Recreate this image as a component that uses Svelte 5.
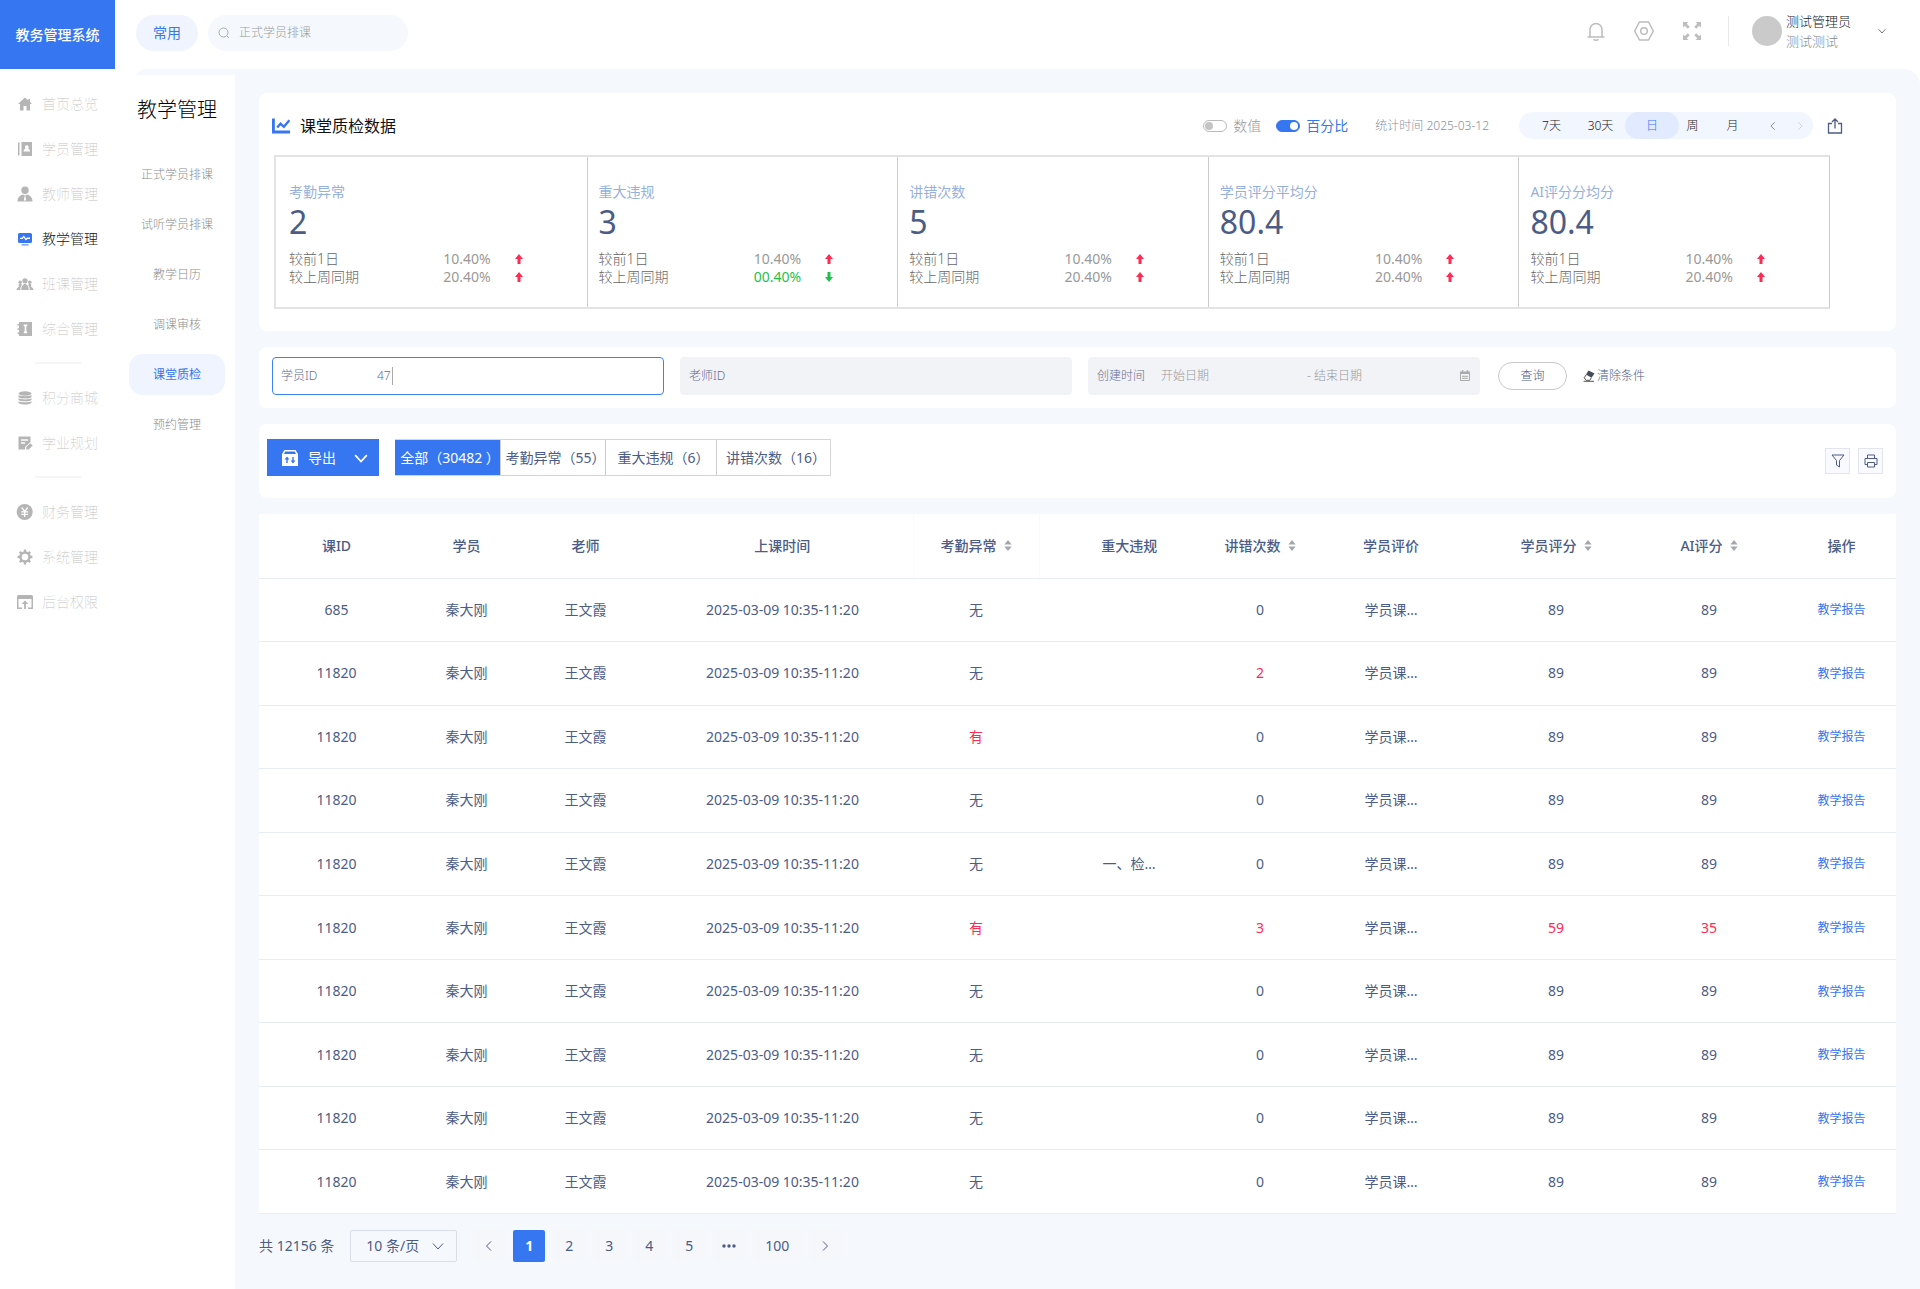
<script>
  let keyword = $state("");
  let studentId = $state("47");
  let teacherId = $state("");
  let startDate = $state("");
  let endDate = $state("");
  let showCount = $state(false);
  let showPercent = $state(true);
  let range = $state("日");
  let activeTab = $state(0);
  let pageSize = $state("10");
  let page = $state(1);

  const menuGroups = [
    [
      { icon: "home", label: "首页总览" },
      { icon: "contact", label: "学员管理" },
      { icon: "teacher", label: "教师管理" },
      { icon: "monitor", label: "教学管理", active: true },
      { icon: "group", label: "班课管理" },
      { icon: "book", label: "综合管理" },
    ],
    [
      { icon: "coins", label: "积分商城" },
      { icon: "plan", label: "学业规划" },
    ],
    [
      { icon: "yen", label: "财务管理" },
      { icon: "gear", label: "系统管理" },
      { icon: "upload", label: "后台权限" },
    ],
  ];

  const subMenu = ["正式学员排课", "试听学员排课", "教学日历", "调课审核", "课堂质检", "预约管理"];

  const stats = [
    { name: "考勤异常", value: "2", day: "10.40%", week: "20.40%" },
    { name: "重大违规", value: "3", day: "10.40%", week: "00.40%", weekDown: true },
    { name: "讲错次数", value: "5", day: "10.40%", week: "20.40%" },
    { name: "学员评分平均分", value: "80.4", day: "10.40%", week: "20.40%" },
    { name: "AI评分分均分", value: "80.4", day: "10.40%", week: "20.40%" },
  ];

  const tabs = ["全部（30482 ）", "考勤异常（55）", "重大违规（6）", "讲错次数（16）"];

  const columns = [
    { title: "课ID" },
    { title: "学员" },
    { title: "老师" },
    { title: "上课时间" },
    { title: "考勤异常", sort: true, edge: true },
    { title: "重大违规" },
    { title: "讲错次数", sort: true },
    { title: "学员评价" },
    { title: "学员评分", sort: true },
    { title: "AI评分", sort: true },
    { title: "操作" },
  ];

  const base = { id: "11820", absent: "无", violation: "", wrong: 0, score: 89, ai: 89 };
  const rows = [
    { ...base, id: "685" },
    { ...base, wrong: 2 },
    { ...base, absent: "有" },
    base,
    { ...base, violation: "一、检…" },
    { ...base, absent: "有", wrong: 3, score: 59, ai: 35 },
    base,
    base,
    base,
    base,
  ];
</script>

{#snippet menuIcon(name)}
  <svg class="menu-icon" viewBox="0 0 16 16" aria-hidden="true">
    {#if name === "home"}
      <path d="M8 1.500 1 8h2v6.500h3.500V10h3v4.500H13V8h2l-2-1.900V3h-1.800v1.400z" />
    {:else if name === "contact"}
      <path d="M1 1.500h1.500v13H1z" />
      <path fill-rule="evenodd" d="M4.500 1h10.500v14H4.500zM9.800 4.300a1.900 1.900 0 0 0-1.300 3.300c-1.200.4-1.900 1.300-1.900 2.900H13c0-1.600-.7-2.500-1.900-2.900a1.900 1.900 0 0 0-1.300-3.300z" />
    {:else if name === "teacher"}
      <circle cx="8" cy="4.200" r="3.700" />
      <path fill-rule="evenodd" d="M.5 15.500c0-4 2.500-6.500 5.500-7l2 1.200 2-1.200c3 .5 5.500 3 5.500 7zM7.400 10.500 7 14l1 1 1-1-.4-3.500z" />
    {:else if name === "monitor"}
      <path fill-rule="evenodd" d="M2.500 2h11A1.500 1.500 0 0 1 15 3.500v7a1.500 1.500 0 0 1-1.500 1.500h-11A1.500 1.500 0 0 1 1 10.500v-7A1.500 1.500 0 0 1 2.500 2zM3 6.800v1.300h2.600l1.200-1.500 2 3 1.800-1.700H13V6.600h-3l-1 .9-2.200-3-1.900 2.300z" />
      <path d="M4.500 13h7v1.700h-7z" opacity=".6" />
    {:else if name === "group"}
      <circle cx="8" cy="4.800" r="2.600" />
      <circle cx="3.200" cy="6.200" r="1.800" />
      <circle cx="12.800" cy="6.200" r="1.800" />
      <path d="M4.300 14c0-3.500 1.500-6 3.700-6s3.700 2.500 3.700 6zM-.5 14c0-1.500 1-2.500 2.300-3V8h2.800v1.500C3.700 10.700 3.300 12.300 3.300 14zM16.500 14c0-1.500-1-2.500-2.300-3V8h-2.800v1.500c.9 1.200 1.300 2.800 1.300 4.500z" />
    {:else if name === "book"}
      <path fill-rule="evenodd" d="M2 1h13v14H2v-2H.5v-1.500H2V8.800H.5V7.300H2V4.500H.5V3H2zM6.700 3.500v1.800h1v4.200L6.500 12.300h4L9.300 9.500V5.300h1V3.500z" />
    {:else if name === "coins"}
      <ellipse cx="8" cy="3.500" rx="6.500" ry="2.200" />
      <path d="M1.500 5c1 1.500 12 1.500 13 0v2c-1 2-12 2-13 0zM1.500 8.300c1 1.500 12 1.500 13 0v1.500c-1 2-12 2-13 0zM1.500 11.200c1 1.500 12 1.500 13 0v1.500c-1 2.400-12 2.400-13 0z" />
    {:else if name === "plan"}
      <path fill-rule="evenodd" d="M1.500 1.500h12V7L8 12v2.500H1.500zM4 4.300v1.400h7V4.300zM4 7.300v1.400h4V7.300z" />
      <path d="m9.200 12.200 4-4 2.500 2.400-4 4H9.200z" />
    {:else if name === "yen"}
      <circle cx="7.700" cy="8" r="8" />
      <path class="knock" d="m4.700 3.500 3 4 3-4M7.700 7.500v5.500M4.300 7.800h6.800M4.300 10.400h6.800" />
    {:else if name === "gear"}
      <circle class="ring" cx="8" cy="8" r="4.500" />
      <path class="teeth" d="M8 .6v2.500M8 12.900v2.500M.6 8h2.500M12.900 8h2.500M2.800 2.800l1.800 1.800M11.400 11.400l1.800 1.800M2.800 13.200l1.800-1.800M11.400 4.600l1.800-1.800" />
    {:else}
      <path fill-rule="evenodd" d="M1.500 1h13A1.500 1.500 0 0 1 16 2.500V15h-5v-1.500h3.500V5h-13v8.500H5V15H0V2.500A1.500 1.500 0 0 1 1.500 1z" />
      <path d="m8 6.500 3.300 3.500H8.900v5H7.100v-5H4.700z" />
    {/if}
  </svg>
{/snippet}

{#snippet chevron(dir)}
  <svg class="chevron" viewBox="0 0 12 12" aria-hidden="true">
    {#if dir === "left"}
      <path d="M8 1.500 3.500 6 8 10.500" />
    {:else if dir === "right"}
      <path d="M4 1.500 8.500 6 4 10.500" />
    {:else}
      <path d="M1 3.500 6 9l5-5.500" />
    {/if}
  </svg>
{/snippet}

{#snippet trend(down)}
  <svg class="trend" class:down viewBox="0 0 8 10" aria-hidden="true">
    {#if down}
      <path d="M2.500 0h3v5H8L4 10 0 5h2.500z" />
    {:else}
      <path d="M4 0l4 5H5.500v5h-3V5H0z" />
    {/if}
  </svg>
{/snippet}

<div class="page">
  <header class="topbar">
    <div class="logo">教务管理系统</div>
    <button class="common">常用</button>
    <label class="search">
      <svg viewBox="0 0 12 12" aria-hidden="true"><circle cx="5.500" cy="5.500" r="4.500" /><path d="m9 9 2 2" /></svg>
      <input type="text" placeholder="正式学员排课" aria-label="搜索" bind:value={keyword} />
    </label>
    <div class="tools">
      <button aria-label="通知">
        <svg viewBox="0 0 20 20"><path d="M4 16V8.500a6 6 0 0 1 12 0V16M1.500 16h17M7.500 18.300c1 1.200 4 1.200 5 0" /></svg>
      </button>
      <button aria-label="设置">
        <svg viewBox="0 0 20 20"><path d="M5.500 1h9L19.300 10l-4.800 9h-9L.7 10z" /><circle cx="10" cy="10" r="3.300" /></svg>
      </button>
      <button aria-label="全屏">
        <svg class="solid" viewBox="0 0 20 20"><path d="M1 1h5.500L4.700 2.800l3 3-1.900 1.900-3-3L1 6.500zM19 1v5.500l-1.800-1.800-3 3-1.900-1.900 3-3L13.500 1zM1 19v-5.500l1.800 1.800 3-3 1.900 1.900-3 3L6.500 19zM19 19h-5.500l1.800-1.800-3-3 1.900-1.900 3 3 1.800-1.800z" /></svg>
      </button>
    </div>
    <div class="user">
      <span class="avatar"></span>
      <div class="who">
        <span>测试管理员</span>
        <span class="role">测试测试</span>
      </div>
      <button class="user-menu" aria-label="用户菜单">{@render chevron("down")}</button>
    </div>
  </header>

  <div class="body">
    <nav class="menu">
      {#each menuGroups as group}
        <ul>
          {#each group as item}
            <li>
              <a href="#menu" class:active={item.active}>
                {@render menuIcon(item.icon)}
                {item.label}
              </a>
            </li>
          {/each}
        </ul>
      {/each}
    </nav>

    <div class="workspace">
      <aside class="submenu">
        <h1>教学管理</h1>
        {#each subMenu as label}
          <a href="#sub" class:active={label === "课堂质检"}>{label}</a>
        {/each}
      </aside>

      <main>
        <section class="card overview">
          <div class="overview-head">
            <svg class="chart-icon" viewBox="0 0 20 16" aria-hidden="true">
              <path d="M1.500 0v14.300H19" />
              <path class="line" d="m5.500 9.500 3.500-4 3.500 3.300L18.300 2" />
            </svg>
            <h2>课堂质检数据</h2>
            <label class="switch"><input type="checkbox" bind:checked={showCount} /><span>数值</span></label>
            <label class="switch"><input type="checkbox" bind:checked={showPercent} /><span>百分比</span></label>
            <span class="time">统计时间 2025-03-12</span>
            <div class="range">
              {#each ["7天", "30天", "日", "周", "月"] as item}
                <button class:active={range === item} onclick={() => (range = item)}>{item}</button>
              {/each}
              <button class="step" aria-label="上一页">{@render chevron("left")}</button>
              <button class="step off" aria-label="下一页">{@render chevron("right")}</button>
            </div>
            <button class="share" aria-label="分享">
              <svg viewBox="0 0 16 16"><path d="M5 5.500H1.500V15h13V5.500H11M8 10.500V1.500M5 4l3-3 3 3" /></svg>
            </button>
          </div>

          <div class="stats">
            {#each stats as stat}
              <div class="stat">
                <div class="stat-name">{stat.name}</div>
                <div class="stat-value">{stat.value}</div>
                <div class="compare">
                  <span>较前1日</span>
                  <span class="rate">{stat.day}</span>
                  {@render trend(false)}
                </div>
                <div class="compare">
                  <span>较上周同期</span>
                  <span class="rate" class:green={stat.weekDown}>{stat.week}</span>
                  {@render trend(stat.weekDown)}
                </div>
              </div>
            {/each}
          </div>
        </section>

        <section class="card filters">
          <label class="field focused">
            <span>学员ID</span>
            <input type="text" style="width: {studentId.length + 1}ch" bind:value={studentId} />
            <i class="caret"></i>
          </label>
          <label class="field">
            <span>老师ID</span>
            <input type="text" bind:value={teacherId} />
          </label>
          <div class="field dates">
            <label for="start-date">创建时间</label>
            <input id="start-date" type="text" placeholder="开始日期" bind:value={startDate} />
            <input type="text" placeholder="- 结束日期" aria-label="结束日期" bind:value={endDate} />
            <svg class="calendar" viewBox="0 0 12 12" aria-hidden="true">
              <path d="M1 1.500h10V4H1zM3 0h1.200v2H3zM7.800 0H9v2H7.800z" />
              <path class="frame" d="M1.500 2v8.500h9V2M3 6.300h6M3 8.300h6" />
            </svg>
          </div>
          <button class="query">查询</button>
          <button class="clear">
            <svg viewBox="0 0 12 12" aria-hidden="true">
              <path d="M5.500.5 11.500 3.500 8.500 7.800 3 4.500z" />
              <path class="outline" d="M3.300 4.700 1.200 7.800l2 2.500h3.600l1.500-2.500M.5 11.300h10.500" />
            </svg>
            清除条件
          </button>
        </section>

        <section class="card toolbar">
          <button class="export">
            <svg viewBox="0 0 16 16" aria-hidden="true">
              <path fill-rule="evenodd" d="M2.500 0h11L16 4v12H0V4zM3.300 1.500 2 4h12l-1.300-2.500zM5 6.500 2.500 9.500h1.800V13h1.400V9.500h1.800zM11 13.500l2.500-3h-1.800V7h-1.400v3.500H8.500z" />
            </svg>
            导出
            {@render chevron("down")}
          </button>
          <div class="tabs">
            {#each tabs as tab, i}
              <button class:active={activeTab === i} onclick={() => (activeTab = i)}>{tab}</button>
            {/each}
          </div>
          <div class="actions">
            <button aria-label="筛选">
              <svg viewBox="0 0 14 14"><path d="M1 1h12L8.500 6.500V13l-3-2V6.500z" /></svg>
            </button>
            <button aria-label="打印">
              <svg viewBox="0 0 14 14"><path d="M3.500 4.500V1h7v3.500M3.500 10.500H1v-6h12v6h-2.500M3.500 8.500h7V13h-7z" /></svg>
            </button>
          </div>
        </section>

        <table>
          <colgroup>
            <col class="c-id" /><col class="c-student" /><col class="c-teacher" /><col class="c-time" />
            <col class="c-absent" /><col class="c-wide" /><col class="c-wrong" /><col class="c-wide" />
            <col class="c-score" /><col class="c-ai" /><col class="c-action" />
          </colgroup>
          <thead>
            <tr>
              {#each columns as col}
                <th class:edge={col.edge}>
                  {#if col.sort}
                    <button class="sort">
                      {col.title}
                      <svg viewBox="0 0 8 12" aria-hidden="true"><path d="M4 0l4 5H0zM4 12l4-5H0z" /></svg>
                    </button>
                  {:else}
                    {col.title}
                  {/if}
                </th>
              {/each}
            </tr>
          </thead>
          <tbody>
            {#each rows as row}
              <tr>
                <td>{row.id}</td>
                <td>秦大刚</td>
                <td>王文霞</td>
                <td>2025-03-09 10:35-11:20</td>
                <td class:bad={row.absent === "有"}>{row.absent}</td>
                <td>{row.violation}</td>
                <td class:bad={row.wrong > 0}>{row.wrong}</td>
                <td>学员课…</td>
                <td class:bad={row.score < 60}>{row.score}</td>
                <td class:bad={row.ai < 60}>{row.ai}</td>
                <td><a href="#report">教学报告</a></td>
              </tr>
            {/each}
          </tbody>
        </table>

        <div class="pager">
          <span>共 12156 条</span>
          <div class="size">
            <select aria-label="每页条数" bind:value={pageSize}>
              <option value="10">10 条/页</option>
              <option value="20">20 条/页</option>
              <option value="50">50 条/页</option>
            </select>
            {@render chevron("down")}
          </div>
          <div class="pages">
            <button aria-label="上一页">{@render chevron("left")}</button>
            {#each [1, 2, 3, 4, 5] as n}
              <button class:active={page === n} onclick={() => (page = n)}>{n}</button>
            {/each}
            <button aria-label="更多">
              <svg class="dots" viewBox="0 0 14 4"><circle cx="2" cy="2" r="1.700" /><circle cx="7" cy="2" r="1.700" /><circle cx="12" cy="2" r="1.700" /></svg>
            </button>
            <button class="last">100</button>
            <button aria-label="下一页">{@render chevron("right")}</button>
          </div>
        </div>
      </main>
    </div>
  </div>
</div>

<style>
  :global(body) {
    margin: 0;
    background: #fff;
  }

  .page {
    --blue: #3676f1;
    --ink: #4c5c86;
    --bg: #f5f9fd;
    --red: #ff2b52;
    font-family: "Noto Sans", "Noto Sans CJK SC", sans-serif;
    font-size: 14px;
    line-height: 20px;
    color: var(--ink);
    min-height: 100vh;
    display: flex;
    flex-direction: column;
  }

  .page :global(*) {
    box-sizing: border-box;
  }

  button,
  input,
  select {
    font: inherit;
    color: inherit;
    border: 0;
    padding: 0;
    margin: 0;
    background: none;
    outline: 0;
  }

  button {
    cursor: pointer;
    display: flex;
    align-items: center;
    justify-content: center;
    white-space: nowrap;
  }

  a {
    color: inherit;
    text-decoration: none;
  }

  svg {
    flex: none;
    fill: none;
    stroke: currentColor;
  }

  .chevron {
    width: 12px;
    height: 12px;
  }

  /* top bar */
  .topbar {
    display: flex;
    align-items: center;
    height: 69px;
    padding-right: 34px;
  }

  .logo {
    width: 115px;
    height: 69px;
    display: flex;
    align-items: center;
    justify-content: center;
    background: var(--blue);
    color: #fff;
    font-weight: 500;
  }

  .common {
    width: 62px;
    height: 36px;
    margin: 0 10px 3px 21px;
    border-radius: 18px;
    background: #eff4ff;
    color: var(--blue);
  }

  .search {
    display: flex;
    align-items: center;
    gap: 9px;
    width: 200px;
    height: 36px;
    margin-bottom: 3px;
    padding: 0 10px;
    border-radius: 18px;
    background: var(--bg);
    font-size: 12px;
    color: #aaa;
    font-weight: 300;
  }

  .search svg {
    width: 12px;
    height: 12px;
  }

  .search input {
    flex: 1;
    min-width: 0;
  }

  input::placeholder {
    color: #999;
    opacity: 1;
  }

  .tools {
    display: flex;
    gap: 28px;
    margin: 0 26px 7px auto;
    color: #bdbdbd;
  }

  .tools svg {
    width: 20px;
    height: 20px;
    stroke-width: 1.500;
  }

  .tools .solid {
    fill: currentColor;
    stroke: none;
  }

  .user {
    display: flex;
    align-items: center;
    height: 30px;
    margin-bottom: 7px;
    padding-left: 23px;
    border-left: 1px solid #e8e8e8;
    font-size: 13px;
    color: #222;
    font-weight: 300;
  }

  .avatar {
    width: 30px;
    height: 30px;
    border-radius: 50%;
    background: #cacaca;
  }

  .who {
    display: flex;
    flex-direction: column;
    margin: 0 27px 0 4px;
  }

  .role {
    color: #888;
  }

  .user-menu {
    color: #777;
  }

  .user-menu :global(svg) {
    width: 8px;
    height: 8px;
    stroke-width: 1.500;
  }

  /* side menus */
  .body {
    flex: 1;
    display: flex;
  }

  .menu {
    width: 132px;
    flex: none;
    padding-top: 12px;
  }

  .menu ul {
    list-style: none;
    margin: 0;
    padding: 0;
  }

  .menu ul + ul::before {
    content: "";
    display: block;
    width: 46px;
    height: 2px;
    margin: 11px 0 11px 35px;
    background: #f5f5f5;
  }

  .menu a {
    display: flex;
    align-items: center;
    gap: 9px;
    height: 45px;
    padding-left: 17px;
    color: #c4c4c4;
    font-weight: 100;
  }

  .menu a.active {
    color: #111;
    font-weight: 300;
  }

  .menu-icon {
    width: 16px;
    height: 16px;
    overflow: visible;
    fill: #b5b5b5;
    stroke: none;
  }

  .active .menu-icon {
    fill: var(--blue);
  }

  .knock {
    fill: none;
    stroke: #fff;
    stroke-width: 1.3;
  }

  .ring,
  .teeth {
    fill: none;
    stroke: #b5b5b5;
    stroke-width: 2.4;
  }

  .workspace {
    flex: 1;
    min-width: 0;
    display: flex;
    border-radius: 16px 16px 0 0;
    background: var(--bg);
  }

  .submenu {
    flex: none;
    display: flex;
    flex-direction: column;
    gap: 9px;
    width: 106px;
    margin: 6px 0 0 -3px;
    padding: 21px 10px 0 0;
    background: #fff;
    text-align: center;
  }

  h1 {
    margin: 0 0 21px;
    font-size: 20px;
    line-height: 28px;
    font-weight: 300;
    color: #000;
  }

  .submenu a {
    display: flex;
    align-items: center;
    justify-content: center;
    height: 41px;
    border-radius: 14px;
    font-size: 12px;
    font-weight: 300;
    color: #8c8c8c;
  }

  .submenu a.active {
    background: #eff4ff;
    color: var(--blue);
    font-weight: 400;
  }

  /* content */
  main {
    flex: 1;
    min-width: 0;
    padding: 24px;
  }

  .card {
    background: #fff;
    border-radius: 8px;
    margin-bottom: 16px;
  }

  .overview {
    padding: 19px 66px 22px 15px;
  }

  .overview-head {
    display: flex;
    align-items: center;
    height: 27px;
    margin: 0 -13px 16px -2px;
  }

  .chart-icon {
    width: 19px;
    height: 16px;
    color: var(--blue);
    stroke-width: 3;
  }

  .chart-icon .line {
    stroke-width: 2.5;
  }

  h2 {
    margin: 0 auto 0 9px;
    font-size: 16px;
    font-weight: 400;
    color: #111;
  }

  .switch {
    display: flex;
    align-items: center;
    gap: 6px;
    margin-right: 15px;
    color: #999;
    font-weight: 300;
  }

  .switch input {
    appearance: none;
    display: flex;
    align-items: center;
    width: 24px;
    height: 12px;
    padding: 0 1px;
    border: 1px solid #bbb;
    border-radius: 6px;
  }

  .switch input::before {
    content: "";
    width: 8px;
    height: 8px;
    border-radius: 50%;
    background: #c4c4c4;
  }

  .switch input:checked {
    justify-content: flex-end;
    border-color: var(--blue);
    background: var(--blue);
  }

  .switch input:checked::before {
    background: #fff;
  }

  .switch input:checked + span {
    color: var(--blue);
    font-weight: 400;
  }

  .time {
    margin: 0 30px 0 12px;
    font-size: 12px;
    color: #858fa5;
    font-weight: 300;
  }

  .range {
    display: flex;
    height: 27px;
    padding-left: 8px;
    border-radius: 14px;
    background: #f2f6ff;
    font-size: 12px;
    color: #222;
    font-weight: 300;
  }

  .range button {
    width: 49px;
    border-radius: 14px;
  }

  .range button.active {
    width: 54px;
    background: #e1eaff;
    color: var(--blue);
  }

  .range button.active ~ button:not(.step) {
    width: 27px;
    margin-right: 13px;
  }

  .range button.step {
    width: 27px;
    color: #777;
  }

  .range button.off {
    color: #ccc;
  }

  .step :global(svg) {
    width: 10px;
    height: 10px;
  }

  .share {
    margin-left: 14px;
  }

  .share svg {
    width: 16px;
    height: 16px;
    stroke-width: 1.300;
  }

  .stats {
    display: grid;
    grid-template-columns: repeat(5, 1fr);
    border: 2px solid #e3e3e3;
    border-right: 1px solid #ccc;
  }

  .stat {
    height: 150px;
    padding: 25px 0 0 13px;
  }

  .stat + .stat {
    padding-left: 11px;
    border-left: 1px solid #ccc;
  }

  .stat-name {
    color: #96b0dc;
  }

  .stat-value {
    height: 36px;
    margin: 2px 0 10px;
    font-size: 32px;
    line-height: 36px;
  }

  .compare {
    display: flex;
    align-items: center;
    height: 18px;
    color: #666;
    font-weight: 300;
  }

  .rate {
    width: 70px;
    margin-left: auto;
    text-align: right;
    color: #999;
    font-weight: 400;
  }

  .rate.green {
    color: #1fbf4b;
  }

  .trend {
    width: 8px;
    height: 10px;
    margin: 0 64px 0 24px;
    fill: var(--red);
    stroke: none;
  }

  .trend.down {
    fill: #1fbf4b;
  }

  /* filters */
  .filters {
    display: flex;
    align-items: center;
    gap: 16px;
    height: 61px;
    padding: 0 13px 3px;
    font-size: 12px;
    font-weight: 300;
  }

  .field {
    flex: 0 1 392px;
    display: flex;
    align-items: center;
    height: 38px;
    padding: 0 9px;
    border-radius: 4px;
    background: #f2f3f7;
    color: #5f6d92;
  }

  .field > span {
    width: 96px;
  }

  .field.focused {
    padding: 0 8px;
    border: 1px solid #3b82f6;
    background: #fff;
  }

  .caret {
    width: 1px;
    height: 18px;
    background: #aaa;
  }

  .field.focused input {
    max-width: 15px;
  }

  .dates label {
    width: 64px;
  }

  .dates input {
    width: 146px;
  }

  .calendar {
    width: 12px;
    height: 12px;
    margin-left: auto;
    fill: #aaa;
    stroke: none;
  }

  .calendar .frame {
    fill: none;
    stroke: #aaa;
  }

  .query {
    width: 69px;
    height: 28px;
    margin-left: 2px;
    border: 1px solid #c8c8c8;
    border-radius: 14px;
    color: #4c5c86;
  }

  .clear {
    gap: 2px;
    color: #4c5c86;
  }

  .clear svg {
    width: 12px;
    height: 12px;
    fill: #444c58;
    stroke: none;
  }

  .clear .outline {
    fill: none;
    stroke: #555;
  }

  /* table toolbar */
  .toolbar {
    display: flex;
    align-items: flex-start;
    height: 74px;
    padding: 15px 13px 0 8px;
  }

  .export {
    width: 112px;
    height: 37px;
    margin-right: 16px;
    padding-left: 4px;
    gap: 10px;
    background: var(--blue);
    color: #fff;
  }

  .export > svg {
    width: 16px;
    height: 16px;
    fill: #fff;
    stroke: none;
  }

  .export :global(.chevron) {
    width: 14px;
    height: 14px;
    margin-left: 8px;
    fill: none;
    stroke: #fff;
    stroke-width: 1.5;
  }

  .tabs {
    display: flex;
    height: 37px;
    border: 1px solid #d5d5d5;
    border-left: 0;
  }

  .tabs button {
    width: 111px;
    padding-left: 5px;
  }

  .tabs button:nth-child(-n + 2) {
    width: 105px;
  }

  .tabs button:last-child {
    width: 114px;
  }

  .tabs button + button {
    border-left: 1px solid #ccc;
  }

  .tabs button.active {
    background: var(--blue);
    color: #fff;
  }

  .actions {
    display: flex;
    gap: 8px;
    margin: 9px 0 0 auto;
  }

  .actions button {
    width: 25px;
    height: 26px;
    border: 1px solid #e2e5ec;
    background: #f8faff;
  }

  .actions svg {
    width: 14px;
    height: 14px;
  }

  /* table */
  table {
    width: 100%;
    height: 700px;
    table-layout: fixed;
    border-collapse: collapse;
    background: #fff;
    text-align: center;
  }

  .c-id { width: 155px; }
  .c-student { width: 105px; }
  .c-teacher { width: 133px; }
  .c-time { width: 261px; }
  .c-absent { width: 126px; }
  .c-wide { width: 180px; }
  .c-wrong { width: 82px; }
  .c-score { width: 150px; }
  .c-ai { width: 156px; }
  .c-action { width: 109px; }

  th,
  td {
    padding: 0;
    border-bottom: 1px solid #e8edf3;
    white-space: nowrap;
  }

  th {
    height: 64px;
    font-weight: 500;
  }

  th.edge {
    border-left: 1px solid #f8fafc;
    border-right: 1px solid #f8fafc;
  }

  .sort {
    display: inline-flex;
    gap: 7px;
    font-weight: 500;
  }

  .sort svg {
    width: 8px;
    height: 11px;
    fill: #a3a8b0;
    stroke: none;
  }

  .bad {
    color: var(--red);
  }

  td a {
    font-size: 12px;
    color: var(--blue);
  }

  /* pager */
  .pager {
    display: flex;
    align-items: center;
    height: 32px;
    margin-top: 16px;
  }

  .size {
    position: relative;
    width: 107px;
    height: 32px;
    margin: 0 16px;
    border: 1px solid #d8dee6;
    border-radius: 2px;
  }

  .size select {
    appearance: none;
    width: 100%;
    height: 100%;
    padding: 0 15px;
  }

  .size :global(.chevron) {
    position: absolute;
    right: 12px;
    top: 9px;
    pointer-events: none;
  }

  .pages {
    display: flex;
    gap: 8px;
  }

  .pages button {
    width: 32px;
    height: 32px;
    border-radius: 2px;
    background: #f5f7fb;
  }

  .pages .last {
    width: 48px;
  }

  .pages button.active {
    background: var(--blue);
    color: #fff;
    font-weight: 700;
  }

  .dots {
    width: 14px;
    height: 4px;
    fill: currentColor;
    stroke: none;
  }
</style>
